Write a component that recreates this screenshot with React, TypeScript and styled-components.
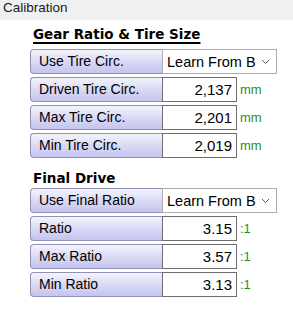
import { FC } from 'react';
import styled, { createGlobalStyle } from 'styled-components';

const GlobalStyle = createGlobalStyle`
  html, body {
    margin: 0;
    padding: 0;
    background: #ffffff;
  }
  body {
    width: 293px;
    height: 329px;
    overflow: hidden;
    font-family: "Liberation Sans", Arial, sans-serif;
  }
`;

interface FieldRow {
  label: string;
  value?: string;
  unit?: string;
  select?: string;
}

const gearRows: FieldRow[] = [
  { label: 'Use Tire Circ.', select: 'Learn From B' },
  { label: 'Driven Tire Circ.', value: '2,137', unit: 'mm' },
  { label: 'Max Tire Circ.', value: '2,201', unit: 'mm' },
  { label: 'Min Tire Circ.', value: '2,019', unit: 'mm' },
];

const driveRows: FieldRow[] = [
  { label: 'Use Final Ratio', select: 'Learn From B' },
  { label: 'Ratio', value: '3.15', unit: ':1' },
  { label: 'Max Ratio', value: '3.57', unit: ':1' },
  { label: 'Min Ratio', value: '3.13', unit: ':1' },
];

const Chevron: FC = () => (
  <svg width="9" height="6" viewBox="0 0 9 6">
    <path d="M1 1 L4.5 4.5 L8 1" fill="none" stroke="#606060" strokeWidth="1" />
  </svg>
);

const Section: FC<{ title: string; underline?: boolean; rows: FieldRow[] }> = ({
  title,
  underline,
  rows,
}) => (
  <SectionBox $gap={underline ? 6 : 1}>
    <Heading $underline={underline}>{title}</Heading>
    <Rows>
      {rows.map(row => (
        <Row key={row.label}>
          <LabelButton>{row.label}</LabelButton>
          {row.select ? (
            <Select>
              <SelectText>{row.select}</SelectText>
              <Chevron />
            </Select>
          ) : (
            <>
              <ValueBox>{row.value}</ValueBox>
              <Unit>{row.unit}</Unit>
            </>
          )}
        </Row>
      ))}
    </Rows>
  </SectionBox>
);

const App: FC = () => (
  <>
    <GlobalStyle />
    <Panel>
      <TitleBar>Calibration</TitleBar>
      <Content>
        <Section title="Gear Ratio & Tire Size" underline rows={gearRows} />
        <Section title="Final Drive" rows={driveRows} />
      </Content>
    </Panel>
  </>
);

export default App;

const Panel = styled.div`
  display: flex;
  flex-direction: column;
  width: 293px;
`;

const TitleBar = styled.div`
  height: 20px;
  background: #f0f0f0;
  padding-left: 3px;
  font-size: 13.5px;
  line-height: 16px;
  color: #1a1a1a;
`;

const Content = styled.div`
  display: flex;
  flex-direction: column;
  gap: 11px;
  padding: 5px 0 0 30px;
`;

const SectionBox = styled.div<{ $gap: number }>`
  display: flex;
  flex-direction: column;
  gap: ${p => p.$gap}px;
`;

const Heading = styled.div<{ $underline?: boolean }>`
  margin-left: 3px;
  font-family: "DejaVu Sans", Verdana, sans-serif;
  font-size: 13.5px;
  font-weight: bold;
  line-height: 18px;
  color: #000;
  text-decoration: ${p => (p.$underline ? 'underline' : 'none')};
  text-underline-offset: 3px;
  text-decoration-thickness: 1.5px;
`;

const Rows = styled.div`
  display: flex;
  flex-direction: column;
  gap: 3px;
`;

const Row = styled.div`
  display: flex;
  align-items: center;
  height: 25px;
`;

const LabelButton = styled.div`
  box-sizing: border-box;
  width: 132px;
  height: 25px;
  padding-left: 8px;
  border: 1px solid #9090b8;
  border-right: none;
  border-radius: 4px 0 0 4px;
  background: linear-gradient(to bottom, #f4f4fc 0%, #dcdcf6 45%, #c4c4f0 100%);
  font-size: 14px;
  line-height: 23px;
  color: #000;
  white-space: nowrap;
`;

const Select = styled.div`
  box-sizing: border-box;
  display: flex;
  align-items: center;
  justify-content: space-between;
  width: 115px;
  height: 25px;
  padding: 0 6px 0 4px;
  border: 1px solid #adadad;
  background: #fff;
`;

const SelectText = styled.span`
  font-size: 14.5px;
  color: #000;
  white-space: nowrap;
  overflow: hidden;
`;

const ValueBox = styled.div`
  box-sizing: border-box;
  width: 75px;
  height: 25px;
  padding-right: 4px;
  border: 1px solid #6e6e6e;
  background: #fff;
  text-align: right;
  font-size: 15px;
  line-height: 23px;
  color: #000;
`;

const Unit = styled.span`
  margin-left: 3px;
  font-size: 13px;
  color: #2c8c2c;
`;
